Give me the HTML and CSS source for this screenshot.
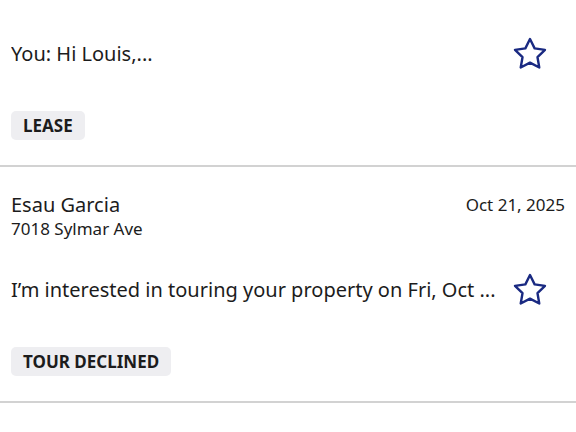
FILE: index.html
```html
<!DOCTYPE html>
<html lang="en">
<head>
  <meta charset="UTF-8" />
  <title>Messages</title>
  <link rel="stylesheet" href="styles.css">
</head>
<body>
  <div class="inbox">
    <div class="thread">
      <div class="thread-head">
        <span class="name">Louis Bennett</span>
        <span class="date">Oct 22, 2025</span>
      </div>
      <div class="address">7425 Montclair Ct 32</div>
      <div class="preview">
        <p class="message">You: Hi Louis,...</p>
        <svg class="star" viewBox="0 0 24 24"><polygon points="12 2 15.09 8.26 22 9.27 17 14.14 18.18 21.02 12 17.77 5.82 21.02 7 14.14 2 9.27 8.91 8.26"/></svg>
      </div>
      <span class="tag">LEASE</span>
    </div>

    <div class="thread">
      <div class="thread-head">
        <span class="name">Esau Garcia</span>
        <span class="date">Oct 21, 2025</span>
      </div>
      <div class="address">7018 Sylmar Ave</div>
      <div class="preview">
        <p class="message">I’m interested in touring your property on Fri, Oct ...</p>
        <svg class="star" viewBox="0 0 24 24"><polygon points="12 2 15.09 8.26 22 9.27 17 14.14 18.18 21.02 12 17.77 5.82 21.02 7 14.14 2 9.27 8.91 8.26"/></svg>
      </div>
      <span class="tag">TOUR DECLINED</span>
    </div>

    <div class="thread">
      <div class="thread-head">
        <span class="name">Leonardo Flores</span>
        <span class="date">Oct 16, 2025</span>
      </div>
      <div class="address">1102 Vista Del Mar</div>
    </div>
  </div>
</body>
</html>
```

FILE: styles.css
```css
body {
  margin: 0;
  background: #fff;
  font-family: 'Noto Sans', 'Open Sans', sans-serif;
  color: #1c1c1c;
  overflow: hidden;
}
.inbox {
  margin-top: -69px;
}
.thread {
  border-bottom: 2px solid #d2d2d2;
  padding: 25px 11px 25px;
}
.thread-head {
  display: flex;
  justify-content: space-between;
  align-items: flex-start;
}
.name {
  font-size: 20px;
  line-height: 26px;
}
.date {
  font-size: 17px;
  line-height: 26px;
}
.address {
  font-size: 17px;
  line-height: 22px;
}
.preview {
  display: flex;
  align-items: center;
  margin-top: 32px;
}
.message {
  flex: 1;
  margin: 0;
  font-size: 20px;
  line-height: 26px;
  white-space: nowrap;
  overflow: hidden;
}
.star {
  width: 36px;
  height: 36px;
  margin: 0 17px 0 8px;
  fill: none;
  stroke: #1a2a82;
  stroke-width: 1.6;
  stroke-linejoin: round;
}
.tag {
  display: inline-block;
  margin-top: 39px;
  padding: 0 12px;
  background: #eeeef1;
  border-radius: 5px;
  font-size: 17px;
  font-weight: 700;
  line-height: 29px;
}
```
